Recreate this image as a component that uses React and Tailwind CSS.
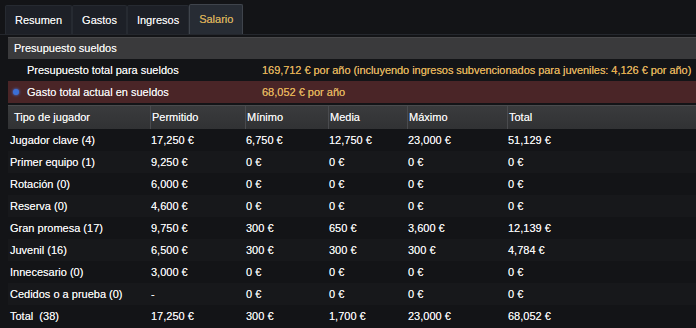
import React from "react";

const rows = [
  ["Jugador clave (4)", "17,250 €", "6,750 €", "12,750 €", "23,000 €", "51,129 €"],
  ["Primer equipo (1)", "9,250 €", "0 €", "0 €", "0 €", "0 €"],
  ["Rotación (0)", "6,000 €", "0 €", "0 €", "0 €", "0 €"],
  ["Reserva (0)", "4,600 €", "0 €", "0 €", "0 €", "0 €"],
  ["Gran promesa (17)", "9,750 €", "300 €", "650 €", "3,600 €", "12,139 €"],
  ["Juvenil (16)", "6,500 €", "300 €", "300 €", "300 €", "4,784 €"],
  ["Innecesario (0)", "3,000 €", "0 €", "0 €", "0 €", "0 €"],
  ["Cedidos o a prueba (0)", "-", "0 €", "0 €", "0 €", "0 €"],
  ["Total  (38)", "17,250 €", "300 €", "1,700 €", "23,000 €", "68,052 €"],
];

const headers = ["Tipo de jugador", "Permitido", "Mínimo", "Media", "Máximo", "Total"];
const grid = "grid grid-cols-[142px_95px_83px_79px_100px_1fr]";

export default function App() {
  return (
    <div
      className="w-[696px] h-[328px] overflow-hidden bg-[#131417] text-[11px] text-[#f7f7f7] [text-shadow:0_0_0.5px_rgba(255,255,255,0.7)]"
      style={{ fontFamily: '"Liberation Sans", Arial, sans-serif' }}
    >
      {/* Tabs */}
      <div className="flex items-end h-[35px] pl-[5px] border-b border-[#24272d]">
        {["Resumen", "Gastos", "Ingresos"].map((t) => (
          <div
            key={t}
            className="h-[29px] px-[9px] flex items-center bg-[#1d2027] border border-b-0 border-[#262a31] rounded-t-[2px] text-[#f4f4f4]"
          >
            {t}
          </div>
        ))}
        <div className="h-[30px] px-[9px] flex items-center bg-[#272c34] border border-b-0 border-[#3f444c] rounded-t-[2px] text-[#d8a63a]">
          Salario
        </div>
      </div>

      {/* Budget panel */}
      <div className="pl-[8px] pt-[2px]">
        <div className="h-[22px] flex items-center pl-[6px] bg-[#3a3a3c] border-t border-[#48484a]">
          Presupuesto sueldos
        </div>
        <div className="h-[22px] flex items-center">
          <div className="w-[254px] shrink-0 pl-[19px]">Presupuesto total para sueldos</div>
          <div className="text-[#e8ae3e] whitespace-nowrap tracking-[-0.05px]">
            169,712 € por año (incluyendo ingresos subvencionados para juveniles: 4,126 € por año)
          </div>
        </div>
        <div className="h-[22px] flex items-center bg-[#4a2527]">
          <div className="w-[19px] shrink-0 pl-[5px] flex items-center">
            <span className="w-[6px] h-[6px] rounded-full bg-[#3b6fd6] shadow-[0_0_3px_#4f86ff]" />
          </div>
          <div className="w-[235px] shrink-0">Gasto total actual en sueldos</div>
          <div className="text-[#e8ae3e]">68,052 € por año</div>
        </div>

        {/* Table */}
        <div className={`${grid} mt-[2px] h-[24px] bg-gradient-to-b from-[#3a3b3d] to-[#313234] border-t border-[#4a4b4d]`}>
          {headers.map((h, i) => (
            <div
              key={h}
              className={`flex items-center ${i === 0 ? "pl-[6px]" : "pl-px border-l border-[#4a4b4e]"}`}
            >
              {h}
            </div>
          ))}
        </div>
        {rows.map((r, ri) => (
          <div
            key={ri}
            className={`${grid} h-[22px] ${ri % 2 === 1 ? "bg-[#17181b]" : "bg-[#131417]"}`}
          >
            {r.map((c, ci) => (
              <div key={ci} className={`flex items-center whitespace-pre ${ci === 0 ? "pl-[2px]" : "pl-px"}`}>
                {c}
              </div>
            ))}
          </div>
        ))}
      </div>
    </div>
  );
}
